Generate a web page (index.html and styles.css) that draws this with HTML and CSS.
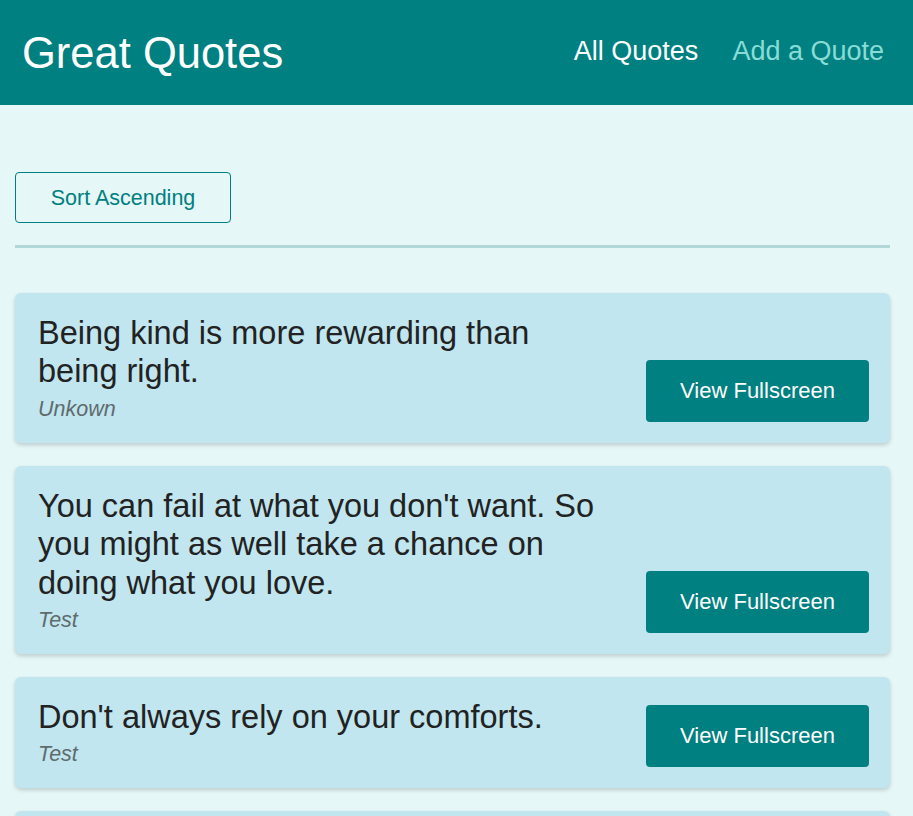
FILE: index.html
```html
<!DOCTYPE html>
<html lang="en">
<head>
<meta charset="utf-8">
<title>Great Quotes</title>
<link rel="stylesheet" href="styles.css">
</head>
<body>
<header class="header">
  <div class="logo">Great Quotes</div>
  <nav class="nav">
    <a class="nav-link active" href="#">All Quotes</a>
    <a class="nav-link" href="#">Add a Quote</a>
  </nav>
</header>
<main class="main">
  <div class="sorting">
    <button class="sort-btn">Sort Ascending</button>
  </div>
  <ul class="list">
    <li class="item">
      <figure class="quote">
        <blockquote class="text">Being kind is more rewarding than being right.</blockquote>
        <figcaption class="author">Unkown</figcaption>
      </figure>
      <a class="btn" href="#">View Fullscreen</a>
    </li>
    <li class="item">
      <figure class="quote">
        <blockquote class="text">You can fail at what you don't want. So you might as well take a chance on doing what you love.</blockquote>
        <figcaption class="author">Test</figcaption>
      </figure>
      <a class="btn" href="#">View Fullscreen</a>
    </li>
    <li class="item">
      <figure class="quote">
        <blockquote class="text">Don't always rely on your comforts.</blockquote>
        <figcaption class="author">Test</figcaption>
      </figure>
      <a class="btn" href="#">View Fullscreen</a>
    </li>
    <li class="item">
      <figure class="quote">
        <blockquote class="text">Stay hungry, stay foolish.</blockquote>
        <figcaption class="author">Test</figcaption>
      </figure>
      <a class="btn" href="#">View Fullscreen</a>
    </li>
  </ul>
</main>
</body>
</html>
```

FILE: styles.css
```css
* { box-sizing: border-box; }

html, body {
  margin: 0;
  padding: 0;
}

body {
  font-family: "Liberation Sans", Arial, sans-serif;
  background: #e6f7f7;
  color: #222;
}

.header {
  height: 105px;
  background: #008080;
  display: flex;
  align-items: center;
  justify-content: space-between;
  padding: 0 29px 0 22px;
}

.logo {
  color: #fff;
  font-size: 43.5px;
  line-height: 48px;
}

.nav {
  display: flex;
  gap: 34px;
  padding-bottom: 3px;
}

.nav-link {
  font-size: 27px;
  line-height: 30px;
  color: #88dcd6;
  text-decoration: none;
}

.nav-link.active {
  color: #ffffff;
}

.main {
  width: 875px;
  margin: 0 0 0 15px;
  padding-top: 67px;
}

.sorting {
  display: flex;
  padding-bottom: 22px;
  border-bottom: 3px solid #b1d7d8;
}

.sort-btn {
  font-family: "Liberation Sans", Arial, sans-serif;
  font-size: 21.5px;
  line-height: 24px;
  color: #008080;
  background: transparent;
  border: 1px solid #008080;
  border-radius: 4px;
  padding: 0;
  width: 216px;
  height: 51px;
  white-space: nowrap;
  cursor: pointer;
}

.list {
  list-style: none;
  margin: 45px 0 0;
  padding: 0;
  display: flex;
  flex-direction: column;
  gap: 23px;
}

.item {
  background: #c1e6ef;
  border-radius: 6px;
  box-shadow: 0 2px 4px rgba(0, 0, 0, 0.18);
  padding: 21px 21px 22px 23px;
  display: flex;
  justify-content: space-between;
  align-items: flex-end;
}

.quote {
  margin: 0;
  width: 566px;
}

.text {
  margin: 0;
  font-size: 32.5px;
  line-height: 38.4px;
  color: #222;
}

.author {
  margin-top: 6px;
  font-size: 21.5px;
  line-height: 24px;
  font-style: italic;
  color: #5f6b6d;
}

.btn {
  display: flex;
  align-items: center;
  justify-content: center;
  width: 223px;
  height: 62px;
  margin-bottom: -1px;
  background: #008080;
  color: #fff;
  border-radius: 4px;
  font-size: 22px;
  text-decoration: none;
}
```
